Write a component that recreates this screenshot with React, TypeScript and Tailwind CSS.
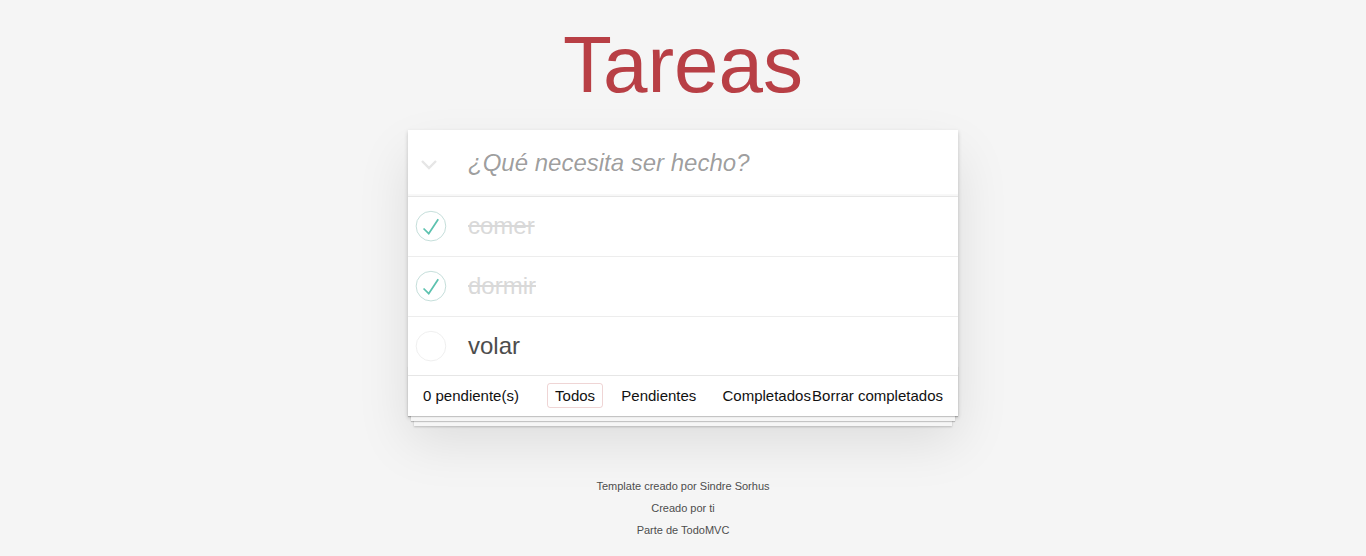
import React from "react";

const todos = [
  { text: "comer", done: true },
  { text: "dormir", done: true },
  { text: "volar", done: false },
];

function Check({ done }: { done: boolean }) {
  return (
    <svg
      width="40"
      height="40"
      viewBox="-10 -18 100 135"
      className="absolute left-0 top-1/2 -translate-y-1/2"
    >
      <circle
        cx="50"
        cy="50"
        r="50"
        fill="none"
        stroke={done ? "#bddad5" : "#ededed"}
        strokeWidth="3"
      />
      {done && <path fill="#5dc2af" d="M72 25L42 71 27 56l-4 4 20 20 34-52z" />}
    </svg>
  );
}

export default function App() {
  return (
    <div className="min-h-screen bg-[#f5f5f5] font-['Liberation_Sans',Arial,Helvetica,sans-serif] text-[14px] text-[#111111] pb-10">
      <h1 className="pt-[25px] h-[105px] mb-[25px] text-center text-[80px] leading-[80px] font-normal text-[#b83f45]">
        Tareas
      </h1>

      <section className="relative mx-auto w-[550px] bg-white shadow-[0_2px_4px_0_rgba(0,0,0,0.2),0_25px_50px_0_rgba(0,0,0,0.1)]">
        <header className="relative">
          <svg
            width="20"
            height="14"
            viewBox="0 0 20 14"
            className="absolute left-[12px] top-[28px]"
          >
            <polyline
              points="2,3 9,10 16,3"
              fill="none"
              stroke="#e6e6e6"
              strokeWidth="2.4"
            />
          </svg>
          <input
            readOnly
            placeholder="¿Qué necesita ser hecho?"
            className="block w-full h-[66px] pl-[60px] pr-4 py-4 text-[24px] leading-[33.6px] bg-transparent outline-none shadow-[inset_0_-2px_1px_rgba(0,0,0,0.03)] placeholder:italic placeholder:text-[rgba(0,0,0,0.4)] font-['Liberation_Sans',Arial,sans-serif]"
          />
        </header>

        <section className="border-t border-[#e6e6e6]">
          <ul>
            {todos.map((t, i) => (
              <li
                key={t.text}
                className={
                  "relative text-[24px] " +
                  (i < todos.length - 1 ? "border-b border-[#ededed]" : "")
                }
              >
                <Check done={t.done} />
                <label
                  className={
                    "block py-[15px] pl-[60px] pr-[15px] leading-[28.8px] " +
                    (t.done ? "line-through text-[#d9d9d9]" : "text-[#4d4d4d]")
                  }
                >
                  {t.text}
                </label>
              </li>
            ))}
          </ul>
        </section>

        <footer className="relative h-[41px] px-[15px] py-[10px] border-t border-[#e6e6e6] text-[15px] leading-[20px] text-[#111111]">
          <div className="absolute inset-x-0 bottom-0 h-[50px] overflow-hidden shadow-[0_1px_1px_rgba(0,0,0,0.2),0_8px_0_-3px_#f6f6f6,0_9px_1px_-3px_rgba(0,0,0,0.2),0_16px_0_-6px_#f6f6f6,0_17px_2px_-6px_rgba(0,0,0,0.2)]" />
          <span className="relative float-left">0 pendiente(s)</span>
          <ul className="absolute inset-x-0 top-[10px] text-center">
            <li className="inline">
              <a className="m-[3px] px-[7px] py-[3px] rounded-[3px] border border-[rgba(175,47,47,0.2)]">
                Todos
              </a>
            </li>{" "}
            <li className="inline">
              <a className="m-[3px] px-[7px] py-[3px] rounded-[3px] border border-transparent">
                Pendientes
              </a>
            </li>{" "}
            <li className="inline">
              <a className="m-[3px] px-[7px] py-[3px] rounded-[3px] border border-transparent">
                Completados
              </a>
            </li>
          </ul>
          <button className="relative float-right leading-[20px] text-[15px] font-['Liberation_Sans',Arial,sans-serif]">
            Borrar completados
          </button>
        </footer>
      </section>

      <footer className="mt-[65px] flex flex-col items-center gap-[11px] text-[11px] leading-[11px] text-[#4d4d4d] [text-shadow:0_1px_0_rgba(255,255,255,0.5)]">
        <p>Template creado por Sindre Sorhus</p>
        <p>Creado por ti</p>
        <p>Parte de TodoMVC</p>
      </footer>
    </div>
  );
}
